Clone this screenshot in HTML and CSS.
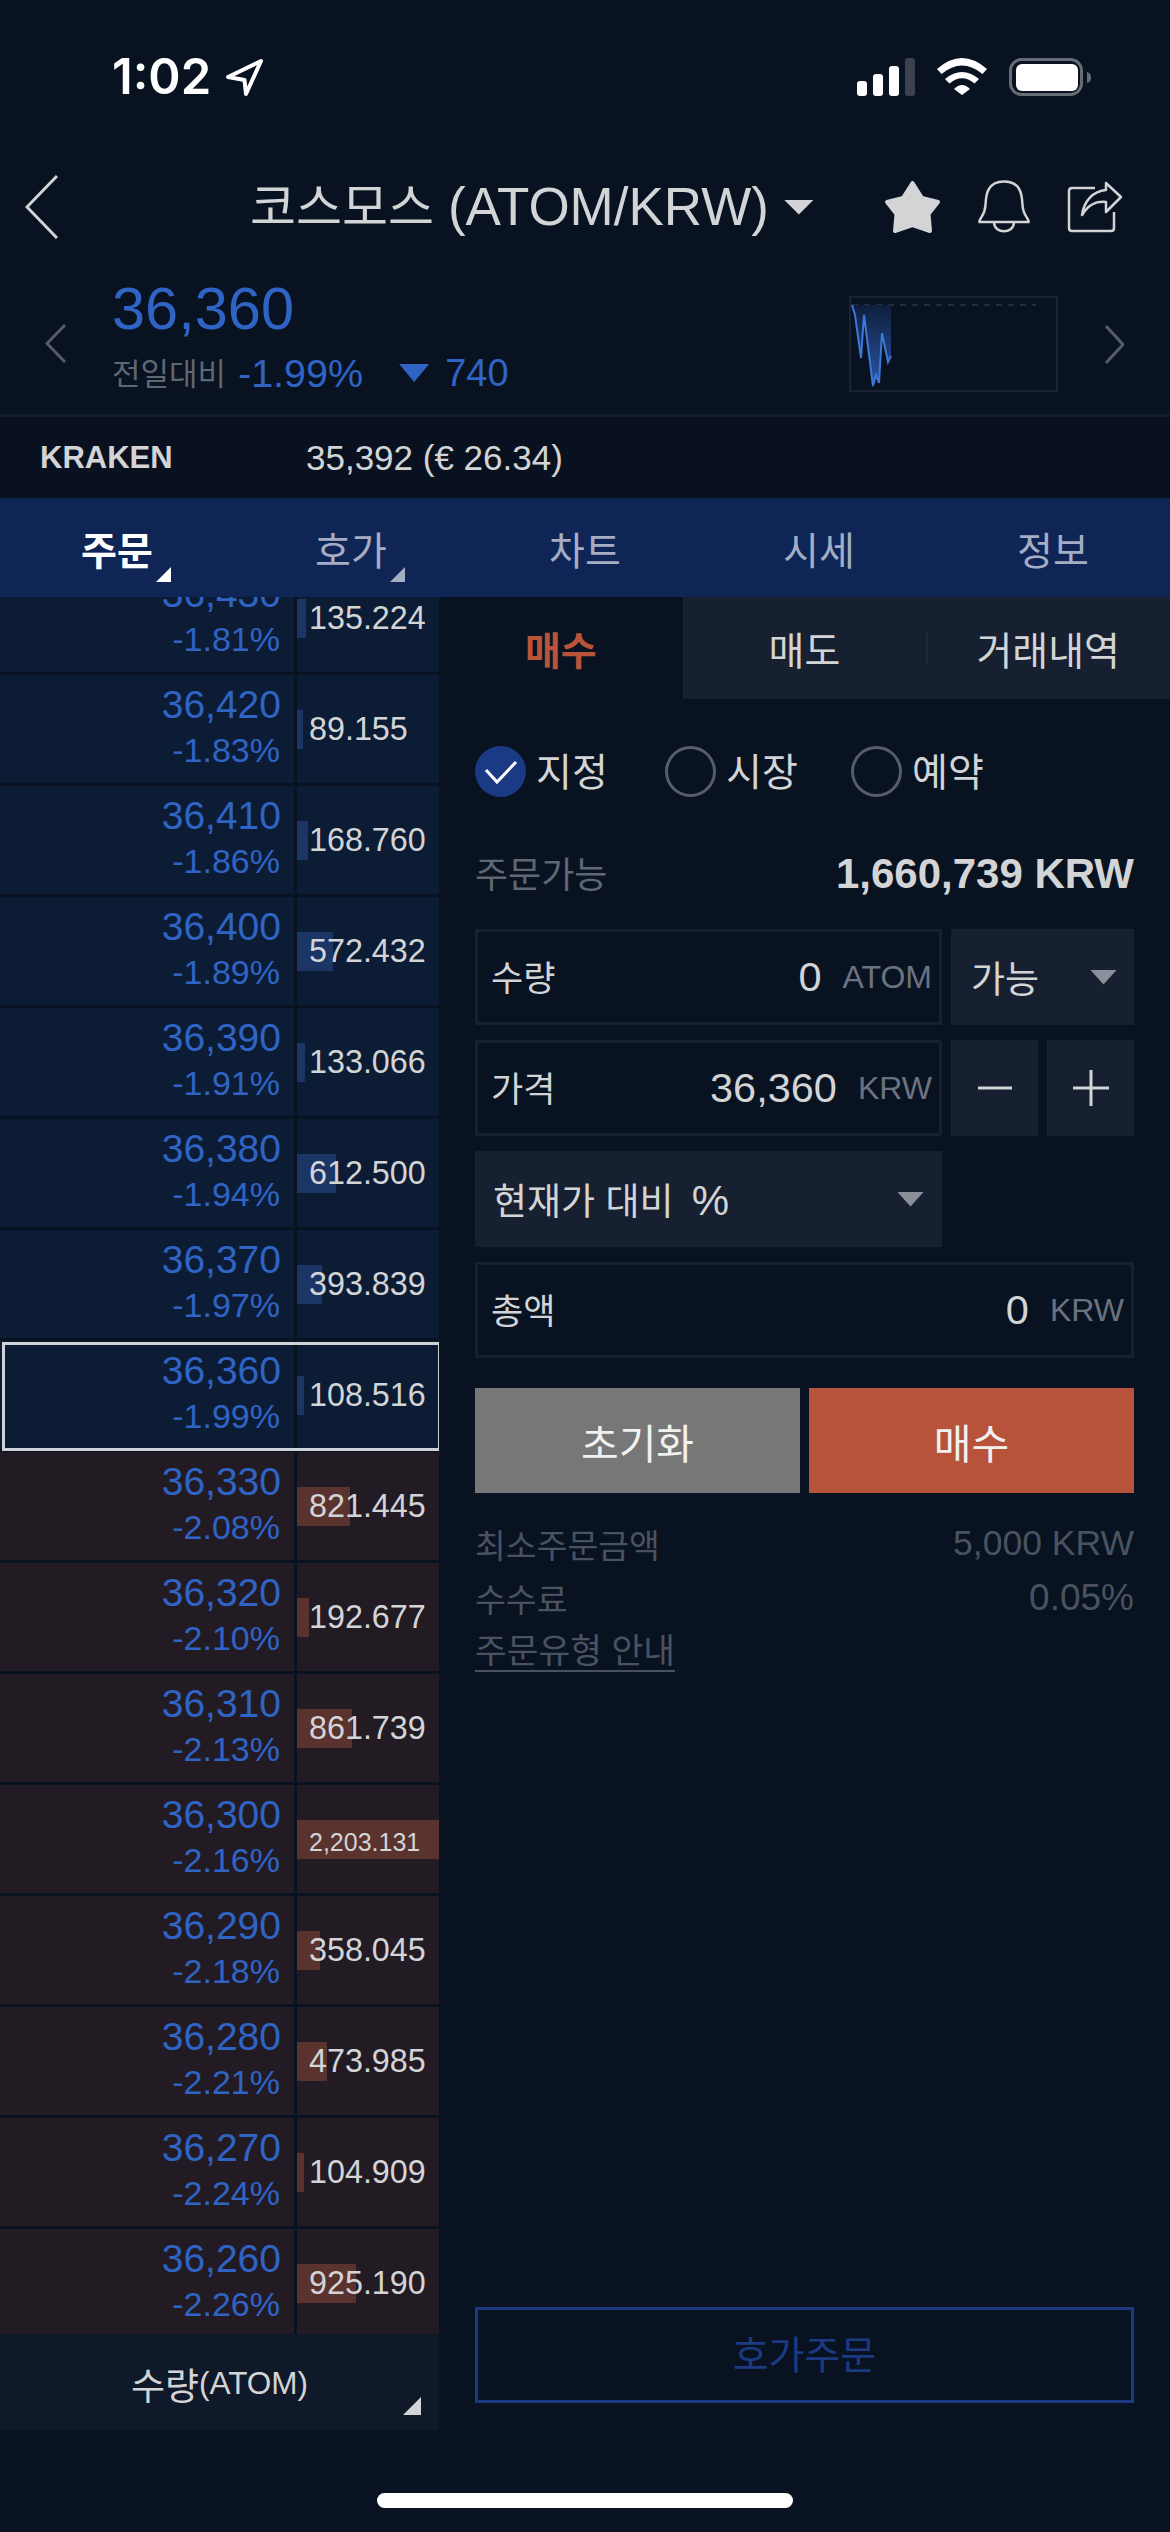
FILE: index.html
```html
<!DOCTYPE html>
<html lang="ko">
<head>
<meta charset="utf-8">
<title>ATOM/KRW 주문</title>
<link rel="stylesheet" href="styles.css">
</head>
<body>
<div class="screen">
  <header class="status">
    <span class="time">1:02</span>
    <svg class="loc" width="40" height="40" viewBox="0 0 40 40"><path d="M36 3 L3 19 L19.5 22 L21 36 Z" fill="none" stroke="#fff" stroke-width="4" stroke-linejoin="round"/></svg>
    <div class="status-icons">
      <svg width="58" height="38" viewBox="0 0 58 38"><rect x="0" y="23" width="10" height="15" rx="3" fill="#fff"/><rect x="16" y="16" width="10" height="22" rx="3" fill="#fff"/><rect x="32" y="8" width="10" height="30" rx="3" fill="#fff"/><rect x="48" y="0" width="10" height="38" rx="3" fill="#3b424e"/></svg>
      <svg width="50" height="38" viewBox="0 0 50 38"><path fill="#fff" d="M0 11 Q25 -11 50 11 L45.5 16 Q25 -1 4.5 16Z M8 21 Q25 7 42 21 L37.5 25.5 Q25 15 12.5 25.5Z M17 31 Q25 23 33 31 L25 37Z"/></svg>
      <svg width="82" height="38" viewBox="0 0 82 38"><rect x="1.5" y="1.5" width="71" height="35" rx="11" fill="none" stroke="#656c76" stroke-width="3"/><rect x="7" y="6" width="62" height="27" rx="6" fill="#fff"/><path d="M78 14 Q82 15 82 19.5 Q82 24 78 25Z" fill="#656c76"/></svg>
    </div>
  </header>

  <nav class="nav">
    <svg class="back" width="33" height="64" viewBox="0 0 33 64"><path d="M32 1 L2 32 L32 63" fill="none" stroke="#d2d4d6" stroke-width="3"/></svg>
    <h1 class="title">코스모스 <span class="title-code">(ATOM/KRW)</span></h1>
    <span class="title-caret"></span>
    <div class="nav-icons">
      <svg width="57" height="54" viewBox="0 0 57 54"><path d="M28.5 3 L38 18 L54 22 L44.5 34 L46 51 L28.5 45 L11 51 L12.5 34 L3 22 L19 18Z" fill="#d2d4d6" stroke="#d2d4d6" stroke-width="4" stroke-linejoin="round"/></svg>
      <svg width="52" height="54" viewBox="0 0 52 54"><path d="M1.5 42 H50.5 C51 38 45 36 44.5 25 C44 17 44 1.5 26 1.5 C8 1.5 8 17 7.5 25 C7 36 1 38 1.5 42Z M16 43 C17 54 35 54 36 43" fill="none" stroke="#d2d4d6" stroke-width="2.5"/></svg>
      <svg width="56" height="52" viewBox="0 0 56 52"><path d="M28 7 H5 Q2 7 2 10 V47 Q2 50 5 50 H44 Q47 50 47 47 V31 M39 2 L54 16 L39 31 V21 C28 20 21 24 15 34 C17 20 26 10 39 9 Z" fill="none" stroke="#d2d4d6" stroke-width="2.5" stroke-linejoin="round"/></svg>
    </div>
  </nav>

  <section class="quote">
    <svg class="q-prev" width="21" height="39" viewBox="0 0 21 39"><path d="M20 1 L2 19.5 L20 38" fill="none" stroke="#555c66" stroke-width="3"/></svg>
    <div class="q-main">
      <div class="q-price">36,360</div>
      <div class="q-sub"><span class="q-label">전일대비</span><span class="q-pct">-1.99%</span><span class="q-tri"></span><span class="q-diff">740</span></div>
    </div>
    <svg class="q-chart" width="209" height="96" viewBox="0 0 209 96">
      <defs><linearGradient id="spark" x1="0" y1="0" x2="0" y2="1"><stop offset="0" stop-color="#0f1f3c"/><stop offset="1" stop-color="#2a55a8"/></linearGradient></defs>
      <rect x="1" y="1" width="207" height="94" fill="none" stroke="#1a2331" stroke-width="2"/>
      <path d="M3 9 H187" stroke="#232d3c" stroke-width="2" stroke-dasharray="6 6"/>
      <path d="M3 9 L6 19 L12 62 L15 19 L24 90 L27 79 L30 87 L33 37 L39 66 L42 60 V9Z" fill="url(#spark)"/>
      <path d="M3 9 L6 19 L12 62 L15 19 L24 90 L27 79 L30 87 L33 37 L39 66 L42 60" fill="none" stroke="#3b78d8" stroke-width="2"/>
    </svg>
    <svg class="q-next" width="19" height="39" viewBox="0 0 19 39"><path d="M1 1 L18 19.5 L1 38" fill="none" stroke="#555c66" stroke-width="3"/></svg>
  </section>

  <section class="ref"><span class="ref-name">KRAKEN</span><span class="ref-val">35,392 (€ 26.34)</span></section>

  <div class="tabs">
    <a class="tab tab-on tab-more">주문</a>
    <a class="tab tab-more">호가</a>
    <a class="tab">차트</a>
    <a class="tab">시세</a>
    <a class="tab">정보</a>
  </div>

  <main class="main">
    <aside class="book">
      <div class="rows">
        <div class="row ask"><div class="p"><b>36,430</b><span>-1.81%</span></div><div class="q"><i style="width:9px"></i><em>135.224</em></div></div>
        <div class="row ask"><div class="p"><b>36,420</b><span>-1.83%</span></div><div class="q"><i style="width:6px"></i><em>89.155</em></div></div>
        <div class="row ask"><div class="p"><b>36,410</b><span>-1.86%</span></div><div class="q"><i style="width:11px"></i><em>168.760</em></div></div>
        <div class="row ask"><div class="p"><b>36,400</b><span>-1.89%</span></div><div class="q"><i style="width:36px"></i><em>572.432</em></div></div>
        <div class="row ask"><div class="p"><b>36,390</b><span>-1.91%</span></div><div class="q"><i style="width:8px"></i><em>133.066</em></div></div>
        <div class="row ask"><div class="p"><b>36,380</b><span>-1.94%</span></div><div class="q"><i style="width:39px"></i><em>612.500</em></div></div>
        <div class="row ask"><div class="p"><b>36,370</b><span>-1.97%</span></div><div class="q"><i style="width:25px"></i><em>393.839</em></div></div>
        <div class="row ask current"><div class="p"><b>36,360</b><span>-1.99%</span></div><div class="q"><i style="width:7px"></i><em>108.516</em></div></div>
        <div class="row bid"><div class="p"><b>36,330</b><span>-2.08%</span></div><div class="q"><i style="width:53px"></i><em>821.445</em></div></div>
        <div class="row bid"><div class="p"><b>36,320</b><span>-2.10%</span></div><div class="q"><i style="width:12px"></i><em>192.677</em></div></div>
        <div class="row bid"><div class="p"><b>36,310</b><span>-2.13%</span></div><div class="q"><i style="width:55px"></i><em>861.739</em></div></div>
        <div class="row bid"><div class="p"><b>36,300</b><span>-2.16%</span></div><div class="q"><i style="width:142px"></i><em class="small">2,203.131</em></div></div>
        <div class="row bid"><div class="p"><b>36,290</b><span>-2.18%</span></div><div class="q"><i style="width:23px"></i><em>358.045</em></div></div>
        <div class="row bid"><div class="p"><b>36,280</b><span>-2.21%</span></div><div class="q"><i style="width:30px"></i><em>473.985</em></div></div>
        <div class="row bid"><div class="p"><b>36,270</b><span>-2.24%</span></div><div class="q"><i style="width:7px"></i><em>104.909</em></div></div>
        <div class="row bid"><div class="p"><b>36,260</b><span>-2.26%</span></div><div class="q"><i style="width:59px"></i><em>925.190</em></div></div>
      </div>
      <div class="book-foot">수량<small>(ATOM)</small></div>
    </aside>

    <section class="panel">
      <div class="subtabs">
        <a class="sub sub-on">매수</a>
        <a class="sub">매도</a>
        <a class="sub sub-sep">거래내역</a>
      </div>
      <div class="form">
        <div class="radios">
          <label class="radio"><span class="dot dot-on"><svg width="51" height="51" viewBox="0 0 51 51"><path d="M11 24 L22 36 L41 16" fill="none" stroke="#fff" stroke-width="3"/></svg></span><span class="radio-text">지정</span></label>
          <label class="radio"><span class="dot"></span><span class="radio-text">시장</span></label>
          <label class="radio"><span class="dot"></span><span class="radio-text">예약</span></label>
        </div>
        <div class="avail"><span class="avail-label">주문가능</span><strong>1,660,739 KRW</strong></div>
        <div class="grid">
          <div class="field"><span>수량</span><b>0</b><u>ATOM</u></div>
          <div class="select span2"><span>가능</span><s class="caret"></s></div>
          <div class="field"><span>가격</span><b>36,360</b><u>KRW</u></div>
          <div class="step"><svg width="34" height="34" viewBox="0 0 34 34"><path d="M0 17 H34" stroke="#d2d4d6" stroke-width="3"/></svg></div>
          <div class="step"><svg width="36" height="36" viewBox="0 0 36 36"><path d="M0 18 H36 M18 0 V36" stroke="#d2d4d6" stroke-width="3"/></svg></div>
          <div class="select pct"><span>현재가 대비 <span class="pct-sign">%</span></span><s class="caret"></s></div>
          <div class="field span3"><span>총액</span><b>0</b><u>KRW</u></div>
        </div>
        <div class="actions">
          <button class="btn btn-reset">초기화</button>
          <button class="btn btn-buy">매수</button>
        </div>
        <ul class="notes">
          <li><span>최소주문금액</span><span class="num">5,000 KRW</span></li>
          <li><span>수수료</span><span class="num num-wide">0.05%</span></li>
          <li><a class="guide">주문유형 안내</a></li>
        </ul>
        <button class="quick">호가주문</button>
      </div>
    </section>
  </main>

  <footer class="home"><span class="home-bar"></span></footer>
</div>
</body>
</html>
```
FILE: styles.css
```css
* { box-sizing: border-box; margin: 0; padding: 0; }
html, body { background: #081220; }
body { font-family: "Liberation Sans", "Noto Sans CJK KR", sans-serif; color: #d2d4d6; }
.screen { width: 1170px; height: 2532px; display: flex; flex-direction: column; overflow: hidden; background: #081220; }

/* status bar */
.status { height: 150px; display: flex; align-items: flex-start; padding: 58px 79px 0 112px; }
.time { font-family: Inter, "Liberation Sans", sans-serif; font-weight: 600; font-size: 49px; line-height: 38px; color: #fff; }
.loc { margin-left: 14px; }
.status-icons { margin-left: auto; display: flex; gap: 22px; }
.status-icons svg { display: block; }

/* nav */
.nav { height: 114px; display: flex; align-items: center; padding: 0 47px 0 25px; }
.back { flex: none; }
.title { font-weight: 400; font-size: 50px; line-height: 60px; margin-left: 192px; white-space: nowrap; }
.title-code { font-size: 53px; }
.title-caret { width: 30px; height: 15px; margin-left: 15px; background: #d2d4d6; clip-path: polygon(0 0, 100% 0, 50% 100%); }
.nav-icons { margin-left: auto; display: flex; align-items: center; gap: 37px; }
.nav-icons svg { display: block; }

/* quote */
.quote { height: 153px; display: flex; align-items: flex-start; padding-top: 15px; border-bottom: 3px solid #131c2b; }
.q-prev { margin: 45px 0 0 45px; flex: none; }
.q-main { margin-left: 46px; }
.q-price { font-size: 59.5px; line-height: 60px; color: #2f64c4; }
.q-sub { margin-top: 12px; display: flex; align-items: center; height: 44px; font-size: 39.5px; }
.q-label { color: #5f6772; font-size: 31px; width: 126px; margin-top: -3px; }
.q-pct { color: #2f64c4; }
.q-tri { width: 30px; height: 18px; margin-left: 36px; background: #2f64c4; clip-path: polygon(0 0, 100% 0, 50% 100%); }
.q-diff { color: #2f64c4; margin-left: 16px; font-size: 38px; }
.q-chart { margin: 17px 0 0 auto; flex: none; }
.q-next { margin: 46px 46px 0 47px; flex: none; }

/* reference exchange */
.ref { height: 81px; display: flex; align-items: center; padding-left: 40px; background: #091120; }
.ref-name { width: 266px; font-weight: 700; font-size: 31px; }
.ref-val { font-size: 35px; }

/* main tabs */
.tabs { height: 99px; display: flex; background: #0f2556; }
.tab { position: relative; flex: 1; display: flex; align-items: center; justify-content: center; font-size: 39px; color: #a4adc4; }
.tab-on { color: #fff; font-weight: 700; }
.tab-more::after { content: ""; position: absolute; left: calc(50% + 39px); top: 69px; width: 15px; height: 15px; background: currentColor; clip-path: polygon(100% 0, 100% 100%, 0 100%); }

.main { height: 1833px; display: flex; }

/* order book */
.book { width: 439px; flex: none; display: flex; flex-direction: column; }
.rows { flex: 1; min-height: 0; overflow: hidden; display: flex; flex-direction: column; gap: 3px; }
.row { position: relative; flex: none; height: 108px; display: grid; grid-template-columns: 294px 142px; column-gap: 3px; }
.row:first-child { margin-top: -33px; }
.p { display: flex; flex-direction: column; align-items: flex-end; padding: 8px 13px 0 0; color: #2f64c4; }
.p b { font-weight: 400; font-size: 39px; line-height: 44px; }
.p span { font-size: 34px; line-height: 46px; padding-right: 1px; }
.q { position: relative; display: flex; align-items: center; padding-left: 12px; }
.q i { position: absolute; left: 0; top: 35px; height: 39px; }
.q em { position: relative; font-style: normal; font-size: 32.3px; line-height: 40px; }
.q em.small { font-size: 25px; margin-top: 5px; }
.ask .p, .ask .q { background: #0d1c35; }
.ask .q i { background: #1a3566; }
.bid .p, .bid .q { background: #221b24; }
.bid .q i { background: #5a322e; }
.current::after { content: ""; position: absolute; left: 2px; right: -2px; top: 1px; bottom: -2px; border: 3px solid #d0d3d6; }
.book-foot { height: 96px; flex: none; position: relative; background: #0f1929; display: flex; align-items: center; justify-content: center; font-size: 37px; padding-top: 3px; }
.book-foot small { font-size: 31.5px; }
.book-foot::after { content: ""; position: absolute; right: 18px; top: 63px; width: 18px; height: 18px; background: #d2d4d6; clip-path: polygon(100% 0, 100% 100%, 0 100%); }

/* right panel */
.panel { flex: 1; display: flex; flex-direction: column; }
.subtabs { height: 102px; display: grid; grid-template-columns: repeat(3, 1fr); background: #172030; }
.sub { display: flex; align-items: center; justify-content: center; font-size: 39px; position: relative; }
.sub-on { background: #081220; color: #b9533a; font-weight: 700; }
.sub-sep::before { content: ""; position: absolute; left: 0; top: 35px; height: 33px; width: 2px; background: #1f2937; }
.form { flex: 1; display: flex; flex-direction: column; padding: 47px 36px 27px; }
.radios { display: grid; grid-template-columns: 190px 186px auto; height: 51px; }
.radio { display: flex; align-items: center; font-size: 39px; gap: 10px; }
.radio-text { margin-top: -6px; }
.dot { flex: none; width: 51px; height: 51px; border-radius: 50%; border: 3px solid #565d68; }
.dot-on { border: 0; background: #1a3a85; }
.dot svg { display: block; }
.avail { margin-top: 52px; height: 50px; display: flex; align-items: center; justify-content: space-between; font-size: 36px; color: #5f6772; }
.avail-label { margin-top: -5px; }
.avail strong { font-size: 42px; color: #d2d4d6; }
.grid { margin-top: 30px; display: grid; grid-template-columns: 467px 87px 87px; gap: 15px 9px; grid-auto-rows: 96px; }
.span2 { grid-column: span 2; }
.span3 { grid-column: span 3; }
.field { border: 3px solid #172030; display: flex; align-items: center; padding: 0 7px 0 13px; }
.field span { font-size: 35px; margin-top: -3px; }
.field b { margin-left: auto; font-weight: 400; font-size: 41.5px; }
.field u { margin-left: 21px; text-decoration: none; font-size: 32px; color: #6b7380; }
.select { background: #172030; display: flex; align-items: center; justify-content: space-between; padding: 0 17px 0 20px; font-size: 37px; }
.pct { grid-column: 1; padding-right: 18px; padding-left: 18px; }
.pct-sign { font-size: 42px; margin-left: 8px; }
.caret { display: block; width: 27px; height: 15px; background: #8a8f99; clip-path: polygon(0 0, 100% 0, 50% 100%); }
.step { background: #172030; display: flex; align-items: center; justify-content: center; }
.step svg { display: block; }
.actions { margin-top: 30px; display: grid; grid-template-columns: 325px 325px; gap: 9px; }
.btn { height: 105px; border: 0; font-family: inherit; font-size: 41px; color: #f1f1f1; }
.btn-reset { background: #777777; }
.btn-buy { background: #b8533b; }
.notes { margin-top: 23px; list-style: none; color: #4a5260; font-size: 33.5px; }
.notes li { height: 54.5px; display: flex; align-items: center; justify-content: space-between; }
.num { font-size: 35.5px; }
.num-wide { font-size: 37px; }
.guide { border-bottom: 2px solid #4a5260; line-height: 38px; font-size: 34.5px; }
.quick { margin-top: auto; height: 96px; width: 100%; padding-bottom: 6px; background: transparent; border: 3px solid #1b3a82; color: #1b3a82; font-family: inherit; font-size: 39px; }

/* home indicator */
.home { flex: 1; display: flex; justify-content: center; padding-top: 63px; }
.home-bar { width: 416px; height: 15px; border-radius: 8px; background: #fff; }
```
